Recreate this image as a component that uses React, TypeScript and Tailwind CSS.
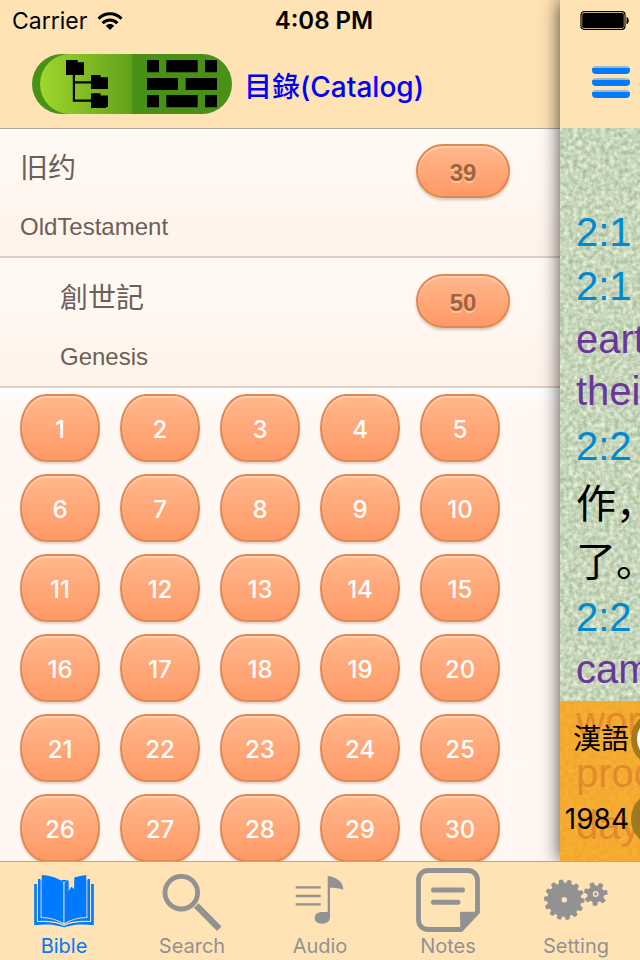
import { useState } from 'react';
import type { ReactNode } from 'react';

interface Book {
  title: string;
  subtitle: string;
  count: number;
  nested?: boolean;
}

const BOOKS: Book[] = [
  { title: '旧约', subtitle: 'OldTestament', count: 39 },
  { title: '創世記', subtitle: 'Genesis', count: 50, nested: true },
];

const CHAPTERS = Array.from({ length: 30 }, (_, i) => i + 1);

const VERSES = [
  { text: '2:1', style: 'leading-[54px] text-[#0089d0]' },
  { text: '2:1', style: 'leading-[54px] text-[#0089d0]' },
  { text: 'earth', style: 'leading-[52px] text-[#6a359c]' },
  { text: 'their', style: 'leading-[52px] text-[#6a359c]' },
  { text: '2:2', style: 'leading-[58px] text-[#0089d0]' },
  { text: '作，', style: 'leading-[58px] text-black' },
  { text: '了。', style: 'leading-[58px] text-black' },
  { text: '2:2', style: 'leading-[52px] text-[#0089d0]' },
  { text: 'came', style: 'leading-[52px] text-[#6a359c]' },
  { text: 'work', style: 'leading-[52px] text-[#6a359c]' },
  { text: 'process', style: 'leading-[52px] text-[#6a359c]' },
  { text: 'day', style: 'leading-[52px] text-[#6a359c]' },
];

function gearPath(cx: number, cy: number, outer: number, inner: number, teeth: number, turn: number) {
  const step = (Math.PI * 2) / teeth;
  const points: string[] = [];
  for (let i = 0; i < teeth; i++) {
    const a = i * step + turn;
    [[-0.36, inner], [-0.2, outer], [0.2, outer], [0.36, inner]].forEach(([t, r]) => {
      points.push(`${(cx + r * Math.cos(a + t * step)).toFixed(2)} ${(cy + r * Math.sin(a + t * step)).toFixed(2)}`);
    });
  }
  return `M${points.join('L')}Z`;
}

function BibleIcon() {
  return (
    <svg viewBox="0 0 64 64" className="size-16" fill="currentColor">
      <path d="M2.200 16H61.800V57.200C52 56 43 56 35 58.500C33 59.600 31 59.600 29 58.500C21 56 12 56 2.200 57.200z" />
      {/* Gap above the stacked page edges */}
      <path d="M0 0H64V15.900H0z" fill="#ffe3b4" />
      <path d="M5.400 11V53.500C15 53 25 53.500 32 57.500C39 53.500 49 53 58.600 53.500V11" fill="currentColor" stroke="#ffe3b4" strokeWidth="1.100" />
      <path d="M9.200 8V49.500C18 49.500 25 51.500 32 56C39 51.500 46 49.500 54.800 49.500V8C46 8.500 37 11 32 15C27 11 18 8.500 9.200 8z" stroke="#ffe3b4" strokeWidth="1.100" />
      <path d="M8.600 4H55.400V12H8.600z" fill="#ffe3b4" />
      <path d="M9.700 7c9 .6 16.600 3 21.700 7.300V55C26 50.800 18.600 48.500 9.700 48z" />
      <path d="M32 14V55" stroke="#ffe3b4" strokeWidth="1.300" />
      <path d="M36.500 8h6v13.500l-3-2.700l-3 4.200z" fill="#ffe3b4" />
      <path d="M32.700 14.300c1-.8 2.200-1.600 3.600-2.400v11.800l3-2.800l3 2.800V9.600c3.700-1.300 7.700-2.200 12-2.600v41c-8.900 .5-16.200 2.800-21.600 7z" />
    </svg>
  );
}

function SearchIcon() {
  return (
    <svg viewBox="0 0 64 64" className="size-16" fill="none" stroke="currentColor">
      <circle cx="21.3" cy="24.700" r="16.300" strokeWidth="4.800" />
      <path d="M36.300 37.600L59.300 60.800" strokeWidth="6.400" />
    </svg>
  );
}

function AudioIcon() {
  return (
    <svg viewBox="0 0 64 64" className="size-16" fill="currentColor">
      <path d="M7.700 18.200h25v2.400h-25zM7.700 26.800h25v2.400h-25zM7.700 35.200h25v2.400h-25z" />
      <path d="M39.700 8c9 1.200 15.600 6 15.600 13.700c-4-1.400-8.300-2-13.300-2V49c0 4.400-3.400 6.700-8 6.700c-4.600 0-7.300-2.300-7.300-5.900c0-3.600 2.700-5.800 7.300-5.800h5.700z" />
    </svg>
  );
}

function NotesIcon() {
  return (
    <svg viewBox="-1 0 64 64" className="size-16" fill="none" stroke="currentColor">
      <path d="M44 61.500H11a9.500 9.500 0 0 1-9.500-9.500V12A9.500 9.500 0 0 1 11 2.500H51A9.500 9.500 0 0 1 60.500 12V44z" strokeWidth="4.800" />
      <path d="M43.300 44.300H61L44 61.500z" fill="currentColor" />
      <path d="M16.500 22H45.500M16.500 34.300H41" strokeWidth="5" strokeLinecap="round" />
    </svg>
  );
}

function SettingIcon() {
  return (
    <svg viewBox="0 0 64 64" className="size-16" fill="currentColor">
      <path d={gearPath(20.3, 31.7, 20.3, 17, 14, 0.05)} />
      <circle cx="20.300" cy="31.700" r="2.800" fill="#ffe3b4" />
      <path d={gearPath(51.7, 26, 12, 8.4, 7, -0.15)} />
      <circle cx="51.700" cy="26" r="2.200" fill="none" stroke="#ffe3b4" strokeWidth="1.400" />
    </svg>
  );
}

const TABS: { label: string; icon: ReactNode }[] = [
  { label: 'Bible', icon: <BibleIcon /> },
  { label: 'Search', icon: <SearchIcon /> },
  { label: 'Audio', icon: <AudioIcon /> },
  { label: 'Notes', icon: <NotesIcon /> },
  { label: 'Setting', icon: <SettingIcon /> },
];

export default function App() {
  const [activeTab, setActiveTab] = useState('Bible');
  const [version, setVersion] = useState('漢語');

  return (
    <div className="flex h-screen flex-col overflow-hidden bg-[#ffe3b4] font-['Inter','Noto_Sans_CJK_SC',sans-serif] text-black">
      <div className="flex min-h-0 flex-1">
        {/* Catalog */}
        <main className="flex min-w-0 flex-1 flex-col">
          <header className="relative h-32 shrink-0 shadow-[0_1px_0_#aaa9a9]">
            <div className="relative z-20 -mr-20 grid h-10 grid-cols-3 items-center pt-[2px]">
              <div className="flex items-center gap-[10px] pl-3 text-[23px]">
                Carrier
                <svg viewBox="0 0 26 18" className="h-[18px] w-[26px]" fill="none" stroke="currentColor" strokeWidth="3">
                  <path d="M1.500 6.800C8 .2 18 .2 24.500 6.800M5.600 11.200c4.200-4.200 10.600-4.200 14.800 0" />
                  <path d="M13 18l-4.200-4.200c2.400-2.300 6-2.300 8.400 0z" fill="currentColor" stroke="none" />
                </svg>
              </div>
              <div className="pl-2 text-center text-2xl font-semibold">4:08 PM</div>
            </div>
            <div className="flex items-center gap-3 pt-[14px] pl-8">
              <div className="flex h-15 w-50 rounded-full bg-[#489016] pl-2">
                <button aria-label="Tree view" className="flex w-[92px] items-center rounded-l-full bg-linear-to-r from-[#9fd72c] to-[#62a11c] pl-[26px]">
                  <svg viewBox="0 0 42 48" className="h-12 w-[42px]">
                    <path d="M0 0h11.700v2.300H18V15H9v6.300h16v-6.300h9.500v2.300H42v11.700H25v-5.400H9v16h16v-6.300h9.500v2.300H42V47h-2v1H25v-6.200H6.800V15H0z" />
                  </svg>
                </button>
                <button aria-label="Grid view" className="flex flex-1 items-center rounded-r-full pl-[15px]">
                  <svg viewBox="0 0 70 48" className="h-12 w-[70px]">
                    <path d="M0 0h12v12.300H0zM19.300 0h31.400v12.300H19.300zM58 0h12v12.300H58zM0 18h31v12H0zM38.700 18H70v12H38.700zM0 35h12v12.300H0zM19.300 35h31.400v12.300H19.300zM58 35h12v12.300H58z" />
                  </svg>
                </button>
              </div>
              <h1 className="pt-[6px] text-[28px] font-medium text-[#0000ff]">目錄(Catalog)</h1>
            </div>
          </header>

          <div className="min-h-0 flex-1 overflow-hidden bg-[#fff7f1]">
            {BOOKS.map(book => (
              <div
                key={book.title}
                className={`flex h-[130px] justify-between border-b-2 border-[#e0cec5] bg-linear-to-b from-[#fffaf5] to-[#fff3ea] pr-[50px] text-[#6b5f58] ${book.nested ? 'pl-15' : 'pl-5'}`}
              >
                <div className="pt-[19px]">
                  <h2 className="text-[28px] leading-[42px] font-normal">{book.title}</h2>
                  <p className="pt-[22px] font-['Liberation_Sans',sans-serif] text-2xl">{book.subtitle}</p>
                </div>
                <button className="mt-4 h-[54px] w-[94px] rounded-full border-2 border-[#e08850] bg-linear-to-b from-[#ffb78c] to-[#ff9966] pt-[3px] font-['Liberation_Sans',sans-serif] text-2xl font-bold text-[#a0633f] shadow-[0_2px_3px_#0003,inset_0_2px_1px_#fff5] text-shadow-[0_2px_0_#ffc8a6]">
                  {book.count}
                </button>
              </div>
            ))}

            <div className="grid grid-cols-[repeat(5,80px)] gap-x-5 gap-y-3 bg-linear-to-b from-white to-[#fff7f1] to-5% px-5 pt-[6px]">
              {CHAPTERS.map(chapter => (
                <button
                  key={chapter}
                  className="h-17 [border-radius:26px/34px] border-2 border-[#e08850] bg-linear-to-b from-[#ffb78c] to-[#ff9966] pt-1 text-2xl font-medium text-white shadow-[0_2px_2px_#0002,inset_0_2px_1px_#fff5]"
                >
                  {chapter}
                </button>
              ))}
            </div>
          </div>
        </main>

        {/* Reader, pushed aside by the catalog */}
        <aside className="relative z-10 flex w-20 shrink-0 flex-col shadow-[0_0_18px_#000b]">
          <header className="flex h-32 shrink-0 flex-col items-end bg-[#ffe3b4] pr-[10px]">
            <svg viewBox="0 0 50 20" className="mt-[11px] h-5 w-[50px]">
              <rect x="1" y=".7" width="44" height="17.600" rx="3" fill="none" stroke="currentColor" strokeWidth="1.200" />
              <rect x="2.200" y="1.900" width="41.600" height="15.200" rx="1.500" />
              <path d="M46.500 6c3 .5 3 6.700 0 7.200z" />
            </svg>
            <button aria-label="Menu" className="mt-[35px] flex w-[38px] flex-col gap-1">
              <span className="h-2 w-full rounded-sm bg-linear-to-b from-[#9dbabd] from-25% to-[#007aff] to-25%" />
              <span className="h-2 w-full rounded-sm bg-linear-to-b from-[#9dbabd] from-25% to-[#007aff] to-25%" />
              <span className="h-2 w-full rounded-sm bg-linear-to-b from-[#9dbabd] from-25% to-[#007aff] to-25%" />
            </button>
          </header>

          <div className="relative min-h-0 flex-1 overflow-hidden bg-[#c8d9ba]">
            {/* Paper grain */}
            <svg className="absolute inset-0 size-full" aria-hidden="true">
              <filter id="grain" x="0" y="0" width="100%" height="100%" colorInterpolationFilters="sRGB">
                <feTurbulence type="fractalNoise" baseFrequency="0.22" numOctaves="3" seed="4" />
                <feColorMatrix values="0.4 0 0 0 0.58  0.34 0 0 0 0.67  0.4 0 0 0 0.53  0 0 0 0 1" />
              </filter>
              <rect width="100%" height="100%" filter="url(#grain)" />
            </svg>
            <div className="relative pt-[77px] pl-4 font-['Liberation_Sans','Noto_Sans_CJK_SC',sans-serif] text-[40px] whitespace-nowrap">
              {VERSES.map((verse, i) => (
                <p key={i} className={verse.style}>{verse.text}</p>
              ))}
            </div>
            <div className="absolute inset-x-0 bottom-0 flex h-40 flex-col bg-[#ffa00ecc]">
              {['漢語', '1984'].map(name => (
                <label key={name} className="flex h-20 items-center justify-end pr-[11px] pb-1 text-[28px]">
                  {name}
                  <input
                    type="radio"
                    name="version"
                    checked={version === name}
                    onChange={() => setVersion(name)}
                    className="-mr-[58px] ml-[2px] size-14 shrink-0 appearance-none rounded-full border-[6px] border-[#a17a1e] bg-[#97782b] checked:bg-white"
                  />
                </label>
              ))}
            </div>
          </div>
        </aside>
      </div>

      <nav className="relative z-20 grid h-[99px] shrink-0 grid-cols-5 border-t border-[#aaa9a9] bg-[#ffe3b4]">
        {TABS.map(tab => (
          <button
            key={tab.label}
            onClick={() => setActiveTab(tab.label)}
            className={`flex flex-col items-center pt-[6px] text-xl leading-7 ${activeTab === tab.label ? 'text-[#007aff]' : 'text-[#929292]'}`}
          >
            {tab.icon}
            {tab.label}
          </button>
        ))}
      </nav>
    </div>
  );
}
